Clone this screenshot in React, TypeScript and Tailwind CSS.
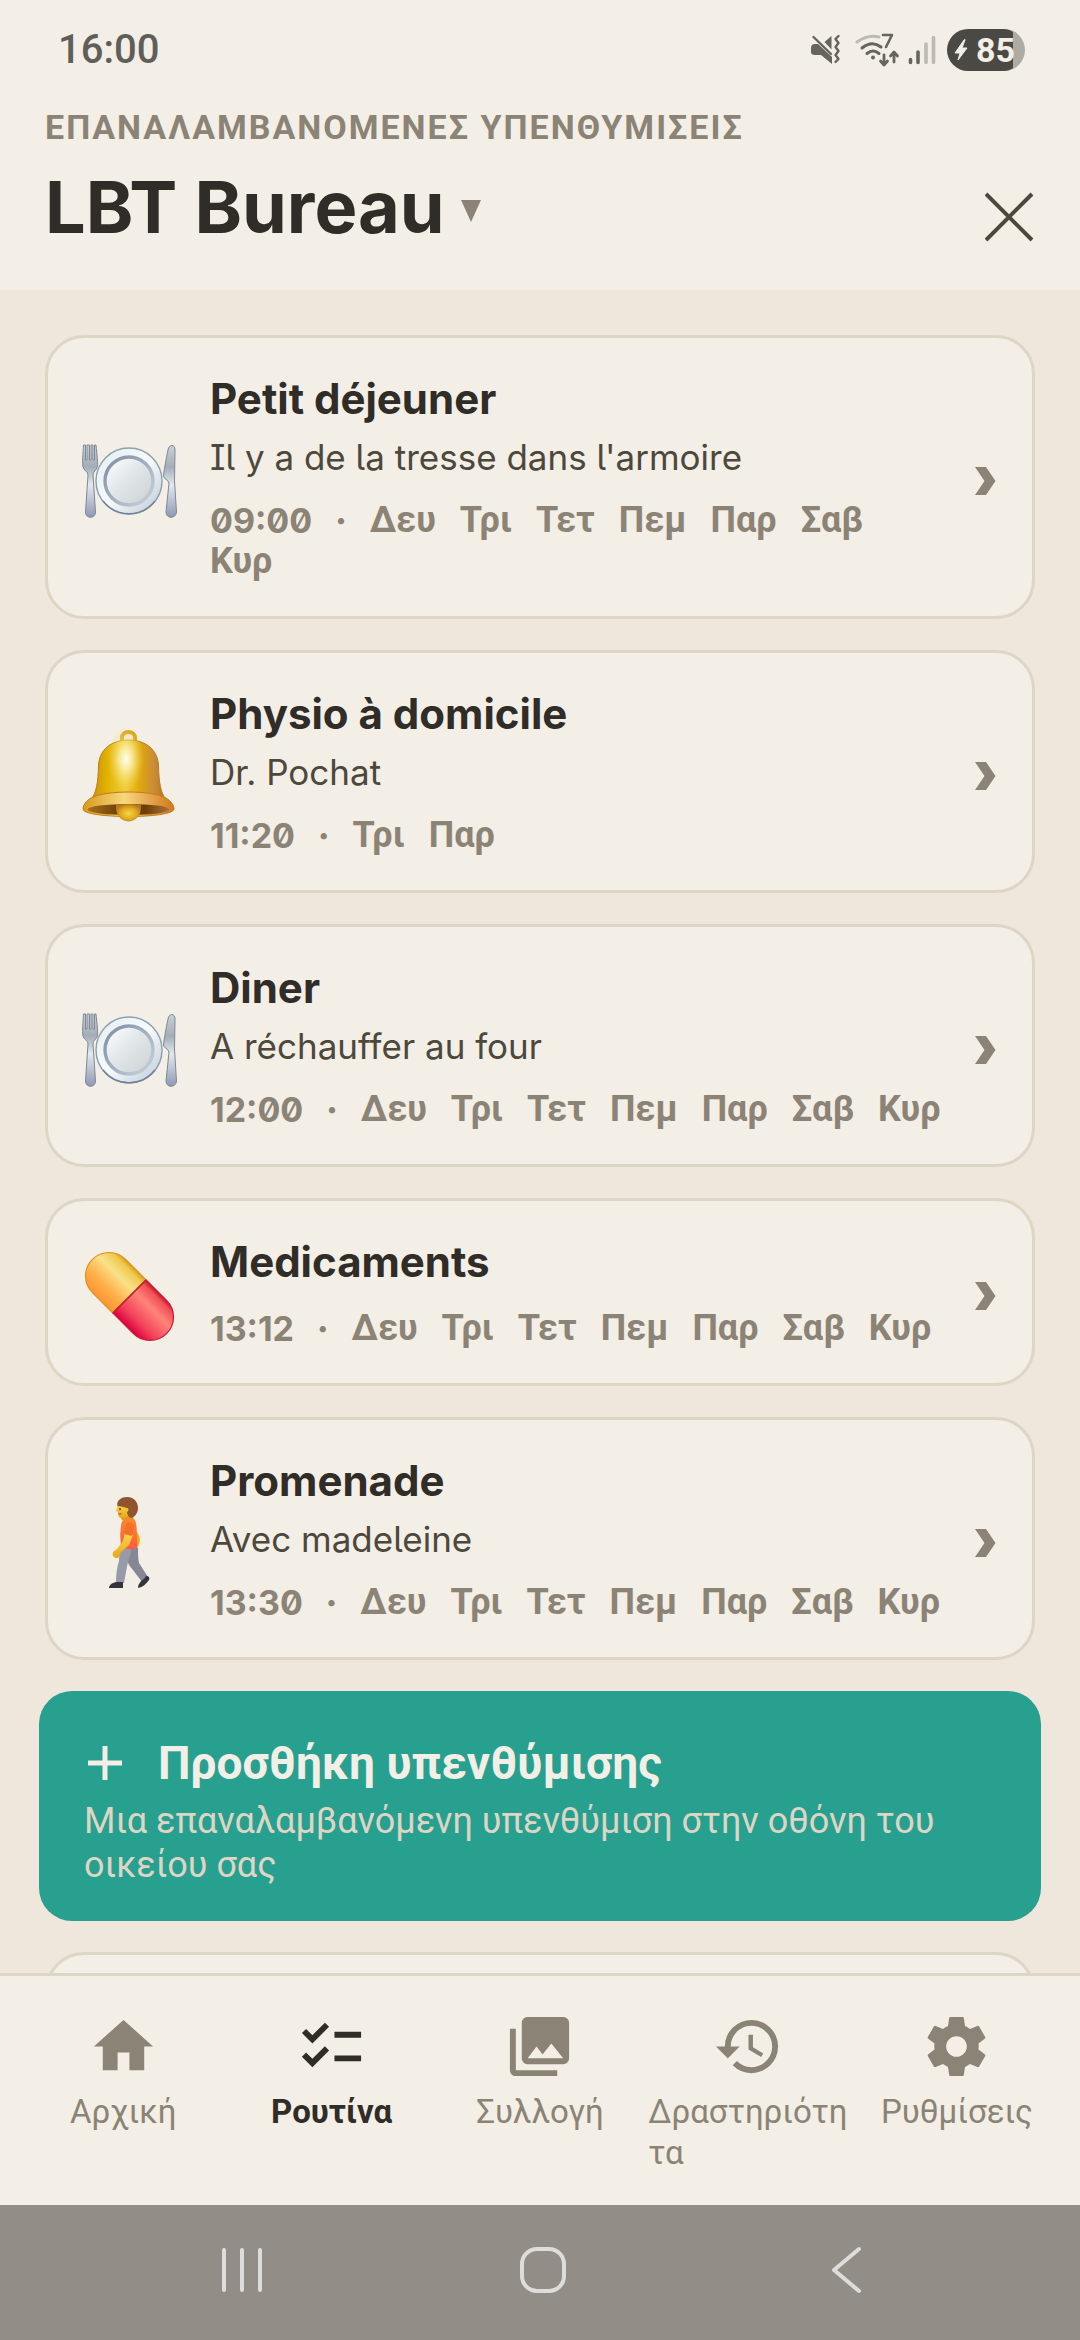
import { MdChecklist, MdHistory, MdHome, MdPhotoLibrary } from "react-icons/md";

const ALL_DAYS = ["Δευ", "Τρι", "Τετ", "Πεμ", "Παρ", "Σαβ", "Κυρ"];

const PlateIcon = () => (
  <svg viewBox="0 0 96 96" className="size-24">
    <defs>
      <linearGradient id="steel" x1="0" y1="0" x2="0" y2="1">
        <stop offset="0" stopColor="#c9d2da" />
        <stop offset="0.3" stopColor="#a3adb8" />
        <stop offset="0.55" stopColor="#e3e9ee" />
        <stop offset="1" stopColor="#8f98b5" />
      </linearGradient>
      <linearGradient id="plateRim" x1="0" y1="0" x2="1" y2="1">
        <stop offset="0" stopColor="#e3edf3" />
        <stop offset="0.5" stopColor="#f7fbfd" />
        <stop offset="1" stopColor="#bcc6d4" />
      </linearGradient>
      <linearGradient id="plateRing" x1="0" y1="0" x2="1" y2="1">
        <stop offset="0" stopColor="#7f8ea1" />
        <stop offset="1" stopColor="#c6d4dc" />
      </linearGradient>
      <linearGradient id="plateInner" x1="0" y1="0" x2="1" y2="1">
        <stop offset="0.1" stopColor="#f8fbfc" />
        <stop offset="0.5" stopColor="#dfe4e7" />
        <stop offset="1" stopColor="#ccd1d4" />
      </linearGradient>
    </defs>
    {/* fork */}
    <path
      d="M2.500 12h2v15h1.500V12h2.500v15h1.500V12h2v15h1.500V12h1.500c1 10 2 17 1.500 21-1 5-4.500 5-4.500 9l2.500 37c0 7-10 7-10 0L7 42c0-4-4.500-4-5.200-9-.5-4 .2-12 .7-21z"
      fill="url(#steel)"
      stroke="#7f8795"
      strokeWidth="1"
    />
    <circle cx="48" cy="48" r="33" fill="url(#plateRim)" stroke="#8ba0ad" strokeWidth="1.4" />
    <path d="M74 68A33 33 0 0 1 22 68" fill="none" stroke="#71839b" strokeWidth="1.4" />
    <circle cx="48" cy="48" r="24" fill="url(#plateInner)" stroke="url(#plateRing)" strokeWidth="3.4" />
    {/* knife */}
    <path
      d="M94 17c0-6-6-6-7 0-2 10-4 20-4.500 26 0 3 4.500 3 5.500 7l-3 29c0 7 10 7 10.500 0L93.500 48z"
      fill="url(#steel)"
      stroke="#7f8795"
      strokeWidth="1"
    />
  </svg>
);

const BellIcon = () => (
  <svg viewBox="0 0 96 96" className="size-24">
    <defs>
      <linearGradient id="bellBody" x1="0" y1="0" x2="1" y2="0">
        <stop offset="0" stopColor="#c98d10" />
        <stop offset="0.2" stopColor="#e0b000" />
        <stop offset="0.45" stopColor="#f0cf3a" />
        <stop offset="0.65" stopColor="#dfa80c" />
        <stop offset="0.85" stopColor="#c98a38" />
        <stop offset="1" stopColor="#b8701a" />
      </linearGradient>
      <radialGradient id="bellShine" cx="0.5" cy="0.5" r="0.5">
        <stop offset="0" stopColor="#fffef2" />
        <stop offset="0.35" stopColor="#fdf2b4" stopOpacity="0.8" />
        <stop offset="1" stopColor="#f3d950" stopOpacity="0" />
      </radialGradient>
      <linearGradient id="bellRim" x1="0" y1="0" x2="1" y2="0">
        <stop offset="0" stopColor="#d89a1c" />
        <stop offset="0.45" stopColor="#f8d87c" />
        <stop offset="0.75" stopColor="#e5a24c" />
        <stop offset="1" stopColor="#d07a1c" />
      </linearGradient>
      <linearGradient id="bellMouth" x1="0" y1="0" x2="1" y2="0">
        <stop offset="0" stopColor="#a8701a" />
        <stop offset="0.4" stopColor="#6b3f06" />
        <stop offset="0.7" stopColor="#6b3f06" />
        <stop offset="1" stopColor="#b07038" />
      </linearGradient>
      <radialGradient id="bellClapper" cx="0.5" cy="0.55" r="0.55">
        <stop offset="0" stopColor="#f6d64c" />
        <stop offset="0.6" stopColor="#dfa81e" />
        <stop offset="1" stopColor="#b5761c" />
      </radialGradient>
    </defs>
    <path d="M41 14v-4C41 2 54 2 54 10v4" fill="none" stroke="#d9a01c" strokeWidth="4" />
    <path d="M47.500 12C30 12 18 22 17.500 38 17 55 15.500 64 10 72h75c-5.500-8-7-17-7.500-34C77 22 65 12 47.500 12z" fill="url(#bellBody)" stroke="#b87c1c" strokeWidth="1" />
    <ellipse cx="45" cy="31" rx="18" ry="32" fill="url(#bellShine)" />
    <path d="M10 70C24 62 71 62 85 70c5 3 8 7 8 11 0 10-91 10-91 0 0-4 3-8 8-11z" fill="url(#bellRim)" stroke="#c07c1c" strokeWidth="1" />
    <ellipse cx="47.500" cy="81.500" rx="41" ry="5.500" fill="url(#bellMouth)" />
    <path d="M35 77c8-1.500 17-1.500 25 0 1 8-4 16.500-12.500 16.500S34 85 35 77z" fill="url(#bellClapper)" />
  </svg>
);

const PillIcon = () => (
  <svg viewBox="0 0 96 96" className="size-24">
    <defs>
      <linearGradient id="pillYellow" x1="0" y1="1" x2="0" y2="0">
        <stop offset="0" stopColor="#ff9432" />
        <stop offset="0.3" stopColor="#ffb04a" />
        <stop offset="0.65" stopColor="#f9e28a" />
        <stop offset="0.9" stopColor="#f0c84c" />
        <stop offset="1" stopColor="#d89e1c" />
      </linearGradient>
      <linearGradient id="pillRed" x1="0" y1="1" x2="0" y2="0">
        <stop offset="0" stopColor="#da0040" />
        <stop offset="0.25" stopColor="#f2405a" />
        <stop offset="0.65" stopColor="#ff8478" />
        <stop offset="0.9" stopColor="#f05058" />
        <stop offset="1" stopColor="#c41424" />
      </linearGradient>
    </defs>
    <g transform="translate(48.500 48.500) rotate(45)">
      <path d="M0-23.500h-29a23.500 23.500 0 0 0 0 47H0z" fill="url(#pillYellow)" stroke="#dc9220" strokeWidth="1.200" />
      <path d="M0-23.500h29a23.500 23.500 0 0 1 0 47H0z" fill="url(#pillRed)" stroke="#cc1838" strokeWidth="1.200" />
      <path d="M0-23v46" stroke="#b8202c" strokeWidth="1.200" />
    </g>
  </svg>
);

const WalkIcon = () => (
  <svg viewBox="0 0 96 96" className="size-24">
    <defs>
      <linearGradient id="shirt" x1="0" y1="0" x2="0" y2="1">
        <stop offset="0" stopColor="#f98a2c" />
        <stop offset="1" stopColor="#ff5a48" />
      </linearGradient>
      <linearGradient id="skin" x1="0" y1="0" x2="0" y2="1">
        <stop offset="0" stopColor="#ffd84a" />
        <stop offset="1" stopColor="#e8a818" />
      </linearGradient>
    </defs>
    <path d="M55 36c5 5 5 13 1 16z" fill="#f0b400" />
    <path d="M42 53h15c0 6 0 11 1 15l9 14-5 6-14-18-6-14z" fill="#858795" />
    <path d="M38.500 53h12c-1 8-3 12-4 16l-3.500 19h-8c0-9 1-16 3-22z" fill="#979aa8" />
    <path d="M28 93c0-3 3-5 7-6h7v6z" fill="#34353c" />
    <path d="M57 93c0-3 2-7 6-9l2-3c3 0 4 2 3 4-3 4-6 7-11 8z" fill="#34353c" />
    <path d="M42 19h9l2 6-8 2-5-3z" fill="#d9960f" />
    <path d="M37 9c-1 3-1 5-2 7l2 1c0 4 1 6 4 6 4 0 6-1 7-4V8z" fill="url(#skin)" />
    <path d="M36.500 11C35 5 41 1.500 47 2c7 .5 10 6 10 11 0 5-3 9-7 10-2-1-4-3-4-6 2-1 2-4 0-4-4-1-6-2-9.500-2z" fill="#8e5530" />
    <path d="M39 13v2" stroke="#5c3418" strokeWidth="1.400" />
    <path d="M37.500 19h3" stroke="#b03c20" strokeWidth="1" />
    <path d="M43 24c3-1.500 7-1.500 10 0 3 3 2.500 10 3 16l.5 13c-5 1.500-12 1.500-17 0 1-6-1-10 0-17 .3-6 1-10 3.500-12z" fill="url(#shirt)" />
    <path d="M44 37l8 3-4 10-9 8c1 3-1 5-4 5-4-1-4-5-2-7l3-2 6-8z" fill="url(#skin)" />
    <path d="M45 29c5-4 9 0 8 5l-2 7-8-2z" fill="#f5702a" />
  </svg>
);

const SettingsIcon = () => (
  <svg viewBox="0 0 24 24" fill="currentColor" className="size-[71px]">
    <path d="M19.430 12.980c.04-.32.07-.64.07-.98s-.03-.66-.07-.98l2.110-1.650c.19-.15.24-.42.12-.64l-2-3.460c-.12-.22-.39-.3-.61-.22l-2.490 1c-.52-.4-1.080-.73-1.690-.98l-.38-2.650C14.460 2.180 14.250 2 14 2h-4c-.25 0-.46.18-.49.42l-.38 2.650c-.61.25-1.170.59-1.690.98l-2.490-1c-.23-.09-.49 0-.61.22l-2 3.460c-.13.22-.07.49.12.64l2.110 1.650c-.04.32-.07.65-.07.98s.03.66.07.98l-2.110 1.650c-.19.15-.24.42-.12.64l2 3.460c.12.22.39.3.61.22l2.490-1c.52.4 1.080.73 1.690.98l.38 2.650c.03.24.24.42.49.42h4c.25 0 .46-.18.49-.42l.38-2.650c.61-.25 1.170-.59 1.690-.98l2.490 1c.23.09.49 0 .61-.22l2-3.460c.12-.22.07-.49-.12-.64l-2.110-1.650zM12 15.500c-1.930 0-3.500-1.570-3.500-3.500s1.570-3.500 3.500-3.500 3.500 1.570 3.500 3.500-1.570 3.500-3.500 3.500z" />
  </svg>
);

const reminders = [
  { icon: PlateIcon, title: "Petit déjeuner", note: "Il y a de la tresse dans l'armoire", time: "09:00", days: ALL_DAYS },
  { icon: BellIcon, title: "Physio à domicile", note: "Dr. Pochat", time: "11:20", days: ["Τρι", "Παρ"] },
  { icon: PlateIcon, title: "Diner", note: "A réchauffer au four", time: "12:00", days: ALL_DAYS },
  { icon: PillIcon, title: "Medicaments", note: "", time: "13:12", days: ALL_DAYS },
  { icon: WalkIcon, title: "Promenade", note: "Avec madeleine", time: "13:30", days: ALL_DAYS },
];

const tabs = [
  { label: "Αρχική", icon: <MdHome className="size-[71px]" /> },
  { label: "Ρουτίνα", icon: <MdChecklist className="size-[71px]" />, active: true },
  { label: "Συλλογή", icon: <MdPhotoLibrary className="size-[71px]" /> },
  { label: "Δραστηριότητα", icon: <MdHistory className="size-[71px]" /> },
  { label: "Ρυθμίσεις", icon: <SettingsIcon /> },
];

const StatusBar = () => (
  <div className="flex h-[100px] items-center justify-between pr-[55px] pl-[58px] text-[#5f5e59]">
    <span className="text-[40px] font-medium">16:00</span>
    <svg viewBox="0 0 216 44" className="h-11 w-[216px]" fill="none" strokeLinecap="round" strokeLinejoin="round">
      {/* muted, vibrating */}
      <path d="M2 20q0-4 4-4h3l14 13v7L12 27H6q-4 0-4-3z" fill="#65645f" />
      <path d="M22.500 8v13.500L15.500 14z" fill="#65645f" />
      <path d="M4.500 9L22 26" stroke="#65645f" strokeWidth="2.400" />
      <path d="M29.500 8l-3 3 3 4-3 4 3 4-3 4 3 4-3 3" stroke="#65645f" strokeWidth="2.400" />
      {/* wifi 7 */}
      <path d="M48 14q11-8 22-5" stroke="#bdbab2" strokeWidth="3" />
      <path d="M53 20q10-8 19-1M58 25.500q6-5 12 0" stroke="#65645f" strokeWidth="3" />
      <circle cx="64" cy="29.500" r="2" fill="#65645f" />
      <path d="M74 7h9l-6 12" stroke="#65645f" strokeWidth="2.600" />
      <path d="M75 27v9M71.500 33l3.500 4 3.500-4M85 34v-9M81.500 28l3.500-4 3.500 4" stroke="#65645f" strokeWidth="2.800" />
      {/* signal */}
      <path d="M101.500 31.500v3M109 24v10.500" stroke="#65645f" strokeWidth="3.600" />
      <path d="M117 16v18.500M124.500 9.500v25" stroke="#bdbab2" strokeWidth="3.600" />
      {/* battery */}
      <path d="M190 1h5a21 21 0 0 1 0 42h-5z" fill="#aeaba4" />
      <path d="M159 1h35q6 0 10 3v36q-4 3-10 3h-35a21 21 0 0 1 0-42z" fill="#4a4943" />
      <path d="M155 12l-9 13h5l-2 7 9-12h-5l3-8z" fill="#f3eee6" stroke="#f3eee6" strokeWidth="1" />
      <text x="167" y="34" fontSize="34" fontWeight="700" fill="#f3eee6">85</text>
    </svg>
  </div>
);

const Chevron = () => (
  <svg viewBox="0 0 21 28" className="mt-2 h-7 w-[21px] shrink-0 fill-[#8b8375]">
    <path d="M0 0h11l9.500 14L11 28H0l9.500-14z" />
  </svg>
);

const App = () => {
  return (
    <div className="flex h-screen flex-col overflow-hidden bg-[#f3eee6] font-['Roboto',sans-serif] text-[#302c27]">
      <StatusBar />

      <header className="flex items-end justify-between px-[45px] pt-[6px] pb-11">
        <div>
          <p className="text-[34px] leading-[42px] font-bold tracking-[2px] text-[#8b8375]">
            ΕΠΑΝΑΛΑΜΒΑΝΟΜΕΝΕΣ ΥΠΕΝΘΥΜΙΣΕΙΣ
          </p>
          <button type="button" className="mt-5 flex items-center gap-4">
            <h1 className="font-['Inter',sans-serif] text-[72px] leading-[78px] font-bold">LBT Bureau</h1>
            <svg viewBox="0 0 20 22" className="mt-2 h-[22px] w-5 fill-[#8b8375]">
              <path d="M0 0h20L10 22z" />
            </svg>
          </button>
        </div>
        <button type="button" aria-label="Κλείσιμο" className="mb-1">
          <svg viewBox="0 0 50 50" className="size-[50px]" stroke="#4d483c" strokeWidth="4">
            <path d="M1 2l46 46M47 2L1 48" />
          </svg>
        </button>
      </header>

      <main className="flex min-h-0 flex-1 flex-col gap-[31px] overflow-hidden bg-[#efe7dc] px-[45px] pt-[45px]">
        {reminders.map((reminder) => (
          <button
            key={reminder.title}
            type="button"
            className="flex w-full shrink-0 items-center rounded-[39px] border-3 border-[#ddd5c5] bg-[#f3eee6] py-[34px] pr-9 pl-[33px] text-left"
          >
            <span className="mt-2 shrink-0">
              <reminder.icon />
            </span>
            <span className="mr-8 ml-[33px] flex-1">
              <span className="block font-['Inter',sans-serif] text-[42px] leading-[54px] font-bold">{reminder.title}</span>
              {reminder.note && (
                <span className="mt-2 block font-['Inter',sans-serif] text-[35px] leading-[47px] text-[#4d483c] [font-feature-settings:'ss02']">
                  {reminder.note}
                </span>
              )}
              <span className="mt-[19px] flex flex-wrap items-center gap-x-6 text-[36px] leading-[41px] font-bold text-[#8b8375]">
                <span className="font-['Inter',sans-serif] text-[34px] slashed-zero">{reminder.time}</span>
                <span className="font-['Inter',sans-serif] text-[20px]">•</span>
                {reminder.days.map((day) => (
                  <span key={day}>{day}</span>
                ))}
              </span>
            </span>
            <Chevron />
          </button>
        ))}

        <button
          type="button"
          className="-mx-[6px] shrink-0 rounded-[33px] bg-[#28a08f] px-[45px] pt-[42px] pb-[34px] text-left text-[#f3eee6]"
        >
          <span className="flex items-center gap-9 text-[46px] leading-[60px] font-bold">
            <svg viewBox="0 0 34 34" className="ml-1 size-[34px]" stroke="currentColor" strokeWidth="5">
              <path d="M17 0v34M0 17h34" />
            </svg>
            Προσθήκη υπενθύμισης
          </span>
          <span className="mt-[6px] block text-[36px] leading-[44px] text-[#ddd5c5]">
            Μια επαναλαμβανόμενη υπενθύμιση στην οθόνη του οικείου σας
          </span>
        </button>

        <div className="h-60 shrink-0 rounded-[39px] border-3 border-[#ddd5c5] bg-[#f3eee6]" />
      </main>

      <nav className="grid shrink-0 grid-cols-5 border-t-3 border-[#ddd5c5] px-[19px] pt-[35px] pb-8">
        {tabs.map((tab) => (
          <a
            key={tab.label}
            href="#"
            className={`flex flex-col items-center px-1 ${tab.active ? "font-bold text-[#302c27]" : "text-[#8b8375]"}`}
          >
            {tab.icon}
            <span className="mt-[9px] text-[33px] leading-[41px] break-all">{tab.label}</span>
          </a>
        ))}
      </nav>

      <div className="flex h-[135px] shrink-0 items-center justify-between bg-[#928e87] px-[215px] pb-2">
        <button type="button" aria-label="Πρόσφατα">
          <svg viewBox="0 0 52 52" className="size-[52px]" stroke="#dedddb" strokeWidth="4" strokeLinecap="round">
            <path d="M9 7v40M27 7v40M45 7v40" />
          </svg>
        </button>
        <button type="button" aria-label="Αρχική οθόνη">
          <svg viewBox="0 0 52 52" className="size-[52px]" fill="none" stroke="#dedddb" strokeWidth="4">
            <rect x="8" y="6" width="42" height="42" rx="15" />
          </svg>
        </button>
        <button type="button" aria-label="Πίσω">
          <svg viewBox="0 0 52 52" className="size-[52px]" fill="none" stroke="#dedddb" strokeWidth="4" strokeLinecap="round" strokeLinejoin="round">
            <path d="M46 6L21 27l25 21" />
          </svg>
        </button>
      </div>
    </div>
  );
};

export default App;
